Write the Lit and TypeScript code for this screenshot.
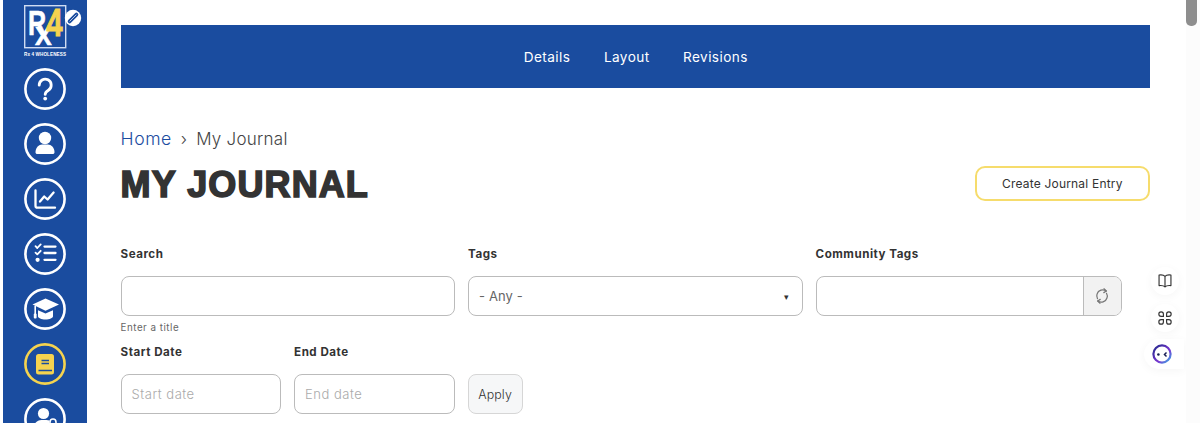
import { LitElement, html, css, svg } from "lit";
import { customElement } from "lit/decorators.js";

const ring = (c: string, inner: unknown) => html`<svg class="ico" viewBox="0 0 42 42" width="42" height="42">
  <circle cx="21" cy="21" r="19.6" fill="none" stroke=${c} stroke-width="2.6"></circle>${inner}</svg>`;

const icons = [
  ring("#fff", svg`<path d="M15.2 17.2a6 6 0 1 1 9.2 5c-2.1 1.3-3.2 2.2-3.2 4.2" fill="none" stroke="#fff" stroke-width="2.8" stroke-linecap="round"/><circle cx="21.2" cy="30.6" r="1.9" fill="#fff"/>`),
  ring("#fff", svg`<circle cx="21" cy="15" r="6.2" fill="#fff"/><path d="M11.5 29.2c0-5 3.5-7.8 6.5-7.8h6c3 0 6.5 2.8 6.5 7.8 0 1.2-.8 1.8-1.8 1.8H13.3c-1 0-1.8-.6-1.8-1.8z" fill="#fff"/>`),
  ring("#fff", svg`<path d="M11.5 12.5v15.2a2 2 0 0 0 2 2H31" fill="none" stroke="#fff" stroke-width="2.3" stroke-linecap="round"/><path d="M16 23.5l4.2-5 3.4 3 6-7" fill="none" stroke="#fff" stroke-width="2.3" stroke-linecap="round" stroke-linejoin="round"/>`),
  ring("#fff", svg`<path d="M11.5 13.2l1.8 1.8 3.4-3.6M11.5 19.6l1.8 1.8 3.4-3.6" fill="none" stroke="#fff" stroke-width="1.8" stroke-linecap="round" stroke-linejoin="round"/><circle cx="13.6" cy="26.8" r="2.1" fill="#fff"/><path d="M20.5 13.6H31.5M20.5 20H31.5M20.5 26.8H31.5" stroke="#fff" stroke-width="2.3" stroke-linecap="round"/>`),
  ring("#fff", svg`<path d="M21.5 10.5L35 16.6 21.5 22.7 8.5 16.6z" fill="#fff"/><path d="M14 22.2v6c0 1.8 3.4 3.2 7.5 3.2s7.5-1.4 7.5-3.2v-6l-7.5 3.2z" fill="#fff"/><path d="M11.2 18v8.5" stroke="#fff" stroke-width="1.6"/><rect x="9.8" y="25.5" width="2.8" height="5" rx="1" fill="#fff"/>`),
  ring("#f5d34f", svg`<rect x="12" y="11" width="18" height="20.5" rx="2.5" fill="#f5d34f"/><path d="M17.5 17.5h7.5M17.5 20.5h7.5M14.5 27.5h13.5" stroke="#1a4c9f" stroke-width="1.3"/>`),
  ring("#fff", svg`<circle cx="19.5" cy="15.5" r="5.6" fill="#fff"/><path d="M9.5 31c0-6 4-9 8-9h5c1 0 2 .2 3 .6V31z" fill="#fff"/><rect x="24" y="26" width="10" height="8" rx="1" fill="#fff"/><path d="M26 26v-2a3 3 0 0 1 6 0v2" fill="none" stroke="#fff" stroke-width="1.6"/>`),
];

@customElement("app-root")
export class AppRoot extends LitElement {
  static styles = css`
    :host { display: block; position: relative; height: 423px; overflow: hidden; background: #fff;
      font-family: Inter, "Liberation Sans", sans-serif; color: #333; }
    * { box-sizing: border-box; }
    .page { display: flex; height: 423px; }
    .side { flex: none; width: 84px; margin-left: 3px; background: #1a4c9f; display: flex; flex-direction: column; align-items: flex-start; padding: 5px 0 0 21px; }
    .logo { display: block; flex: none; }
    .logo text { font-family: "Liberation Sans", sans-serif; }
    .icons { display: flex; flex-direction: column; gap: 13px; margin-top: 9px; }
    .ico { display: block; flex: none; }
    .main { flex: 1; padding: 25px 50px 0 33.6px; min-width: 0; }
    .nav { height: 63px; background: #1a4c9f; display: flex; align-items: center; justify-content: center; gap: 33.5px; color: #fff; font-size: 13.6px; letter-spacing: .42px; font-weight: 400; padding-left: 1px; }
    .crumb { margin-top: 40px; height: 22px; line-height: 22px; font-size: 17px; letter-spacing: .25px; font-weight: 300; color: #444; display: flex; }
    .crumb a { color: #1a4c9f; font-size: 17.6px; letter-spacing: .55px; }
    .crumb .sep { margin: 0 9px 0 9px; }
    .head { display: flex; justify-content: space-between; align-items: flex-start; margin-top: 4px; }
    h1 { margin: 10px 0 0; font-family: "Liberation Sans", sans-serif; font-weight: 700; font-size: 36px; line-height: 42px; letter-spacing: 1.1px; color: #333; -webkit-text-stroke: 1.6px #333; }
    .cta { width: 175.4px; height: 35px; border: 2px solid #f6dc6c; border-radius: 10px; background: #fff; display: flex; align-items: center; justify-content: center; font-size: 12px; letter-spacing: .2px; color: #333; margin-top: 12px; }
    .row { display: flex; gap: 13px; }
    .r1 { margin-top: 40px; }
    .r2 { margin-top: 10px; }
    .f { display: flex; flex-direction: column; flex: none; }
    .w1 { width: 334.5px; } .w3 { width: 306px; } .wd { width: 160.5px; }
    label { font-size: 11.6px; font-weight: 700; line-height: 16px; height: 16px; letter-spacing: .5px; color: #333; }
    .box { margin-top: 14px; height: 40px; border: 1px solid #bbb; border-radius: 8px; background: #fff; display: flex; align-items: center; padding: 0 10px; font-size: 13px; color: #aaa; letter-spacing: .5px; font-weight: 300; }
    .sel { justify-content: space-between; color: #666; font-weight: 400; letter-spacing: .1px; }
    .caret { color: #333; font-size: 9px; margin-right: 2px; }
    .auto { padding: 0; justify-content: flex-end; overflow: hidden; }
    .addon { width: 38px; height: 100%; background: #f2f2f2; border-left: 1px solid #bbb; display: flex; align-items: center; justify-content: center; }
    .help { font-size: 9.8px; line-height: 12px; margin-top: 6px; color: #666; letter-spacing: .5px; }
    .apply { margin-top: 30px; width: 55px; height: 40px; border: 1px solid #d6d6d6; border-radius: 8px; background: #f6f7f8; display: flex; align-items: center; justify-content: center; font-size: 12.4px; font-weight: 300; color: #333; letter-spacing: .1px; }
    .bar { position: absolute; right: 0; top: 0; width: 14px; height: 423px; background: #fcfcfc; }
    .thumb { width: 11px; height: 26px; background: #8e8e8e; border-radius: 0 0 5px 5px; }
    .fab { position: absolute; display: flex; align-items: center; justify-content: center; background: #fff; box-shadow: 0 2px 10px rgba(0,0,0,.04); }
    .f1 { left: 1151px; top: 267px; width: 28px; height: 28px; border-radius: 50%; }
    .f2 { left: 1151px; top: 304px; width: 28px; height: 28px; border-radius: 50%; }
    .f3 { left: 1144px; top: 339px; width: 40px; height: 30px; border-radius: 15px 0 0 15px; justify-content: flex-start; padding-left: 8px; }
  `;

  render() {
    return html`<div class="page">
      <aside class="side">
        <svg class="logo" width="60" height="54" viewBox="0 0 60 54">
          <rect x="0.7" y="0.7" width="41" height="42" fill="#1a4c9f" stroke="#cfdcf2" stroke-width="1.4"></rect>
          <text transform="translate(4 30) scale(.72 1)" font-size="35" font-weight="700" fill="#fff" stroke="#fff" stroke-width=".6">R</text>
          <text x="11" y="40" font-size="25" font-weight="700" fill="#fff" stroke="#fff" stroke-width=".6">X</text>
          <text transform="translate(22.5 31) scale(.76 1)" font-size="38" font-weight="700" fill="#f5d34f" stroke="#f5d34f" stroke-width="1">4</text>
          <text x="0" y="51" font-size="4.6" font-weight="700" fill="#fff" textLength="42">Rx 4 WHOLENESS</text>
          <circle cx="49" cy="13" r="8.2" fill="#fff"></circle>
          <path d="M45.6 16.4L52.4 9.6" stroke="#1a4c9f" stroke-width="3.8" stroke-linecap="round"></path>
          <path d="M45.6 16.4L52.4 9.6" stroke="#fff" stroke-width="0.7"></path>
        </svg>
        <div class="icons">${icons}</div>
      </aside>
      <main class="main">
        <nav class="nav"><span>Details</span><span>Layout</span><span>Revisions</span></nav>
        <div class="crumb"><a>Home</a><span class="sep">›</span><span>My Journal</span></div>
        <div class="head"><h1>MY JOURNAL</h1><div class="cta">Create Journal Entry</div></div>
        <div class="row r1">
          <div class="f w1"><label>Search</label><div class="box"></div><div class="help">Enter a title</div></div>
          <div class="f w1"><label>Tags</label><div class="box sel"><span>- Any -</span><span class="caret">▾</span></div></div>
          <div class="f w3"><label>Community Tags</label><div class="box auto"><div class="addon">
            <svg width="18" height="18" viewBox="0 0 16 16" fill="none" stroke="#777" stroke-width="1.1" stroke-linecap="round" stroke-linejoin="round"><path d="M11.8 3.6A5.2 5.2 0 0 0 3.6 6.2c-.5 1.5-.3 3 .4 4.2"></path><path d="M4.2 12.4a5.2 5.2 0 0 0 8.2-2.6c.5-1.5.3-3-.4-4.2"></path><path d="M9.8 1.6l2 2-2.2 1.4M6.2 14.4l-2-2 2.2-1.4"></path></svg>
          </div></div></div>
        </div>
        <div class="row r2">
          <div class="f wd"><label>Start Date</label><div class="box">Start date</div></div>
          <div class="f wd"><label>End Date</label><div class="box">End date</div></div>
          <div class="apply">Apply</div>
        </div>
      </main>
    </div>
    <div class="fab f1"><svg width="16" height="16" viewBox="0 0 14 14" fill="none" stroke="#333" stroke-width="1" stroke-linejoin="round"><path d="M7 3C6 1.8 4 1.5 1.8 1.8V11C4 10.8 6 11 7 12.2 8 11 10 10.8 12.2 11V1.8C10 1.5 8 1.8 7 3zM7 3V12.2"></path></svg></div>
    <div class="fab f2"><svg width="16" height="16" viewBox="0 0 14 14" fill="none" stroke="#333" stroke-width="1"><path d="M5.6 5.6H3.6A2 2 0 1 1 5.6 3.6zM8.4 5.6V3.6A2 2 0 1 1 10.4 5.6zM5.6 8.4V10.4A2 2 0 1 1 3.6 8.4zM8.4 8.4H10.4A2 2 0 1 1 8.4 10.4z"></path></svg></div>
    <div class="fab f3"><svg width="20" height="20" viewBox="0 0 20 20"><defs><linearGradient id="g" x1="0" y1="0" x2="1" y2="1"><stop offset="0" stop-color="#1f2a8a"></stop><stop offset=".6" stop-color="#7a35d0"></stop><stop offset="1" stop-color="#38b6e8"></stop></linearGradient></defs><circle cx="10" cy="10" r="8.6" fill="#fff" stroke="url(#g)" stroke-width="2.2"></circle><circle cx="6.4" cy="10.5" r="1.3" fill="#1a1f55"></circle><path d="M14.5 8.5l-2 2 2 2" fill="none" stroke="#1a1f55" stroke-width="1.5"></path></svg></div>
    <div class="bar"><div class="thumb"></div></div>`;
  }
}
